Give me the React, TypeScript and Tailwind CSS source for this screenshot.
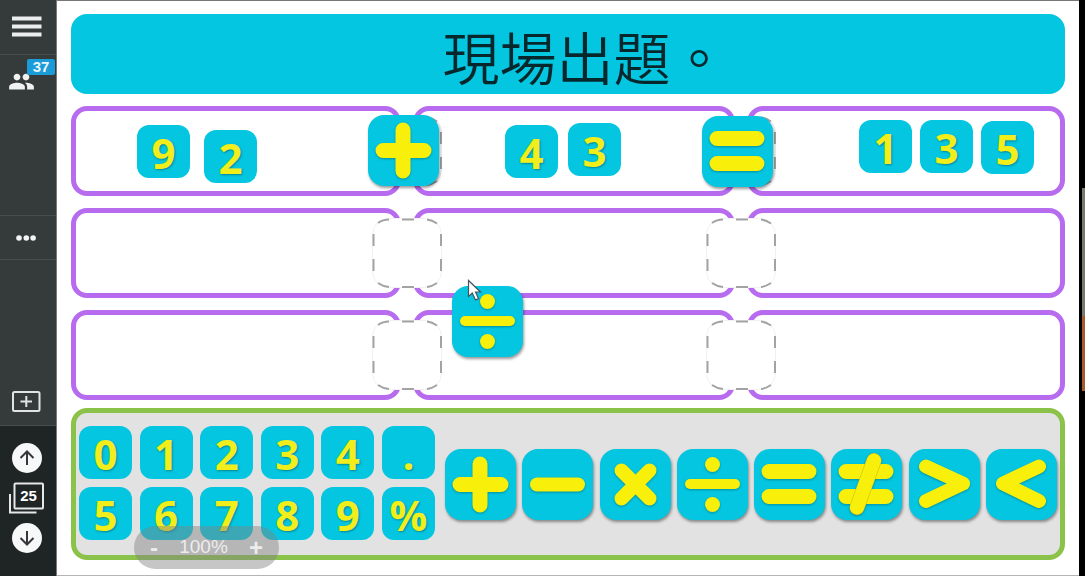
import React from "react";
import { MdPeople } from "react-icons/md";

type OpName = "plus" | "minus" | "times" | "divide" | "equals" | "notEquals" | "greater" | "less";

const digitRows: string[][] = [
  ["0", "1", "2", "3", "4", "."],
  ["5", "6", "7", "8", "9", "%"],
];

const operators: OpName[] = ["plus", "minus", "times", "divide", "equals", "notEquals", "greater", "less"];

const opLabels: Record<OpName, string> = {
  plus: "+",
  minus: "−",
  times: "×",
  divide: "÷",
  equals: "=",
  notEquals: "≠",
  greater: ">",
  less: "<",
};

const placedDigits = [
  { value: "9", place: "left-[80px] top-[124px]" },
  { value: "2", place: "left-[147px] top-[129px]" },
  { value: "4", place: "left-[448px] top-[124px]" },
  { value: "3", place: "left-[511px] top-[122px]" },
  { value: "1", place: "left-[802px] top-[119px]" },
  { value: "3", place: "left-[863px] top-[119px]" },
  { value: "5", place: "left-[924px] top-[120px]" },
];

const placedOps: { op: OpName; place: string }[] = [
  { op: "plus", place: "left-[311px] top-[114px]" },
  { op: "equals", place: "left-[645px] top-[115px]" },
  { op: "divide", place: "left-[395px] top-[285px]" },
];

function OpShape({ op }: { op: OpName }) {
  switch (op) {
    case "plus":
      return <path d="M35 15V56M15 35.5H56" strokeWidth="15" />;
    case "minus":
      return <path d="M15 35.5H56" strokeWidth="14" />;
    case "times":
      return <path d="M21.5 21.5L49.5 49.5M49.5 21.5L21.5 49.5" strokeWidth="14" />;
    case "divide":
      return (
        <>
          <path d="M13 35H58" strokeWidth="10" />
          <circle cx="35.5" cy="15.5" r="7.5" fill="#f8ef0a" stroke="none" />
          <circle cx="35.5" cy="55.5" r="7.5" fill="#f8ef0a" stroke="none" />
        </>
      );
    case "equals":
      return <path d="M15 22.5H55M15 47.5H55" strokeWidth="15" />;
    case "notEquals":
      return (
        <>
          <path d="M15 22.5H55M15 47.5H55" strokeWidth="15" />
          <path d="M43 11.5L26 58.5" stroke="#b9b81c" strokeWidth="15" />
          <path d="M43 11.5L26 58.5" strokeWidth="14" />
        </>
      );
    case "greater":
      return <path d="M17 17.5L54 34.5L17 52" strokeWidth="14" />;
    case "less":
      return <path d="M53 17.5L17 34.5L53 52" strokeWidth="14" />;
  }
}

function OpTile({ op, className = "" }: { op: OpName; className?: string }) {
  return (
    <button
      type="button"
      aria-label={opLabels[op]}
      className={`size-[71px] shrink-0 rounded-2xl bg-[#04c6e0] shadow-[1px_2px_3px_rgba(0,0,0,0.4)] ${className}`}
    >
      <svg
        viewBox="0 0 71 71"
        className="size-full drop-shadow-[0px_1px_1px_rgba(0,60,60,0.4)]"
        fill="none"
        stroke="#f8ef0a"
        strokeLinecap="round"
        strokeLinejoin="round"
      >
        <OpShape op={op} />
      </svg>
    </button>
  );
}

function DigitTile({ value, className = "" }: { value: string; className?: string }) {
  return (
    <button
      type="button"
      className={`size-[53px] shrink-0 rounded-xl bg-[#04c6e0] text-center font-['Open_Sans',sans-serif] text-[42px] leading-[55px] font-bold text-[#f1ee1c] [text-shadow:1px_1px_2px_rgba(0,70,70,0.5)] ${className}`}
    >
      {value}
    </button>
  );
}

function Slot() {
  return (
    <div className="absolute top-[5px] -right-[46px] z-10 size-[70px] rounded-2xl bg-white">
      <svg viewBox="0 0 70 70" className="size-full" fill="none">
        <rect x="0.5" y="0.5" width="69" height="69" rx="16" stroke="#f1f1f1" />
        <path
          d="M6 5Q11 1.500 17 1.500M30 1.500H42M55 1.500Q60 2 65 5.500M69 16V28M69 41V53M65 65Q60 68.500 55 69M42 69H30M17 69Q11 68.500 6 65M1.500 53V41M1.500 28V16"
          stroke="#a3a3a3"
          strokeWidth="2"
        />
      </svg>
    </div>
  );
}

function EquationRow() {
  const cell = "relative h-[90px] rounded-2xl border-5 border-[#b76cf0]";
  return (
    <div className="grid grid-cols-[330fr_322fr_318fr] gap-3">
      <div className={cell}>
        <Slot />
      </div>
      <div className={cell}>
        <Slot />
      </div>
      <div className={cell} />
    </div>
  );
}

function ArrowCircle({ down = false }: { down?: boolean }) {
  return (
    <button type="button" aria-label={down ? "下一頁" : "上一頁"} className="size-[30px] rounded-full bg-[#f7f8f8]">
      <svg viewBox="0 0 30 30" className="size-full" fill="none" stroke="#33393a" strokeWidth="2">
        {down ? <path d="M15 8V21.500M8.500 15L15 21.500L21.500 15" /> : <path d="M15 22V8.500M8.500 15L15 8.500L21.500 15" />}
      </svg>
    </button>
  );
}

function Sidebar() {
  return (
    <nav className="flex w-[57px] shrink-0 flex-col border-r border-[#777b7b] bg-[#353a3b]">
      <button type="button" aria-label="選單" className="flex h-[55px] items-center border-b border-[#484e4e] pl-3">
        <svg viewBox="0 0 30 22" className="h-[22px] w-[30px]" stroke="#eceeee" strokeWidth="4">
          <path d="M0 2.500H29.500M0 10.500H29.500M0 18.500H29.500" />
        </svg>
      </button>
      <div className="h-[161px] border-b border-[#484e4e] pt-1">
        <button type="button" aria-label="參與者" className="relative block h-10 w-[55px]">
          <MdPeople className="absolute top-[9px] left-2 size-[27px] text-[#f0f2f2]" />
          <span className="absolute top-0 right-0 w-7 rounded-xs bg-[#1b9bd8] text-center font-['Liberation_Sans',sans-serif] text-[15px] leading-4 font-bold text-[#e9f6fc]">
            37
          </span>
        </button>
      </div>
      <button type="button" aria-label="更多" className="flex h-11 items-center border-b border-[#484e4e] pl-4">
        <svg viewBox="0 0 20 6" className="h-[6px] w-5" fill="#f3f5f5">
          <circle cx="3" cy="3" r="2.800" />
          <circle cx="10.300" cy="3" r="2.800" />
          <circle cx="17.100" cy="3" r="2.800" />
        </svg>
      </button>
      <div className="flex grow items-end border-b border-[#484e4e] pb-[13px] pl-3">
        <button type="button" aria-label="新增頁面">
          <svg viewBox="0 0 29 21" className="block h-[21px] w-[29px]" fill="none" stroke="#e2e4e4" strokeWidth="2">
            <rect x="1" y="1" width="26.500" height="19" rx="1.500" />
            <path d="M14.300 5V16M8.500 10.500H20" />
          </svg>
        </button>
      </div>
      <div className="flex h-[150px] flex-col items-center gap-[9px] bg-[#1f2425] pt-[17px] pr-[3px]">
        <ArrowCircle />
        <button type="button" className="relative h-8 w-9" aria-label="頁 25">
          <svg viewBox="0 0 36 32" className="absolute inset-0 size-full" fill="none" stroke="#e6e8e8" strokeWidth="2">
            <rect x="5.500" y="1.500" width="28.500" height="25" rx="1" />
            <path d="M1 12V30.500H27.500" />
          </svg>
          <span className="absolute top-[5px] left-[6px] w-7 text-center font-['Liberation_Sans',sans-serif] text-[15px] leading-[18px] font-bold text-white">
            25
          </span>
        </button>
        <ArrowCircle down />
      </div>
    </nav>
  );
}

export default function App() {
  return (
    <div className="flex min-h-screen bg-black">
      <Sidebar />
      <main className="relative min-w-0 grow border-t border-b border-t-[#777] border-b-[#b5b5b5] bg-white px-[14px] pt-[13px]">
        <h1 className="h-20 rounded-2xl bg-[#04c6e0] pl-[34px] text-center font-['Noto_Sans_CJK_TC',sans-serif] text-[57px] leading-[82px] font-[350] text-[#06272c]">
          現場出題。
        </h1>
        <div className="mt-3 flex flex-col gap-3">
          <EquationRow />
          <EquationRow />
          <EquationRow />
        </div>

        <section className="mt-2 flex h-[152px] items-start gap-[10px] rounded-2xl border-5 border-[#8bc34a] bg-[#e2e2e2] pr-[3px] pl-[3px]">
          <div className="flex w-[356px] shrink-0 flex-col gap-2 pt-[13px]">
            {digitRows.map((row) => (
              <div key={row[0]} className="flex justify-between">
                {row.map((value) => (
                  <DigitTile key={value} value={value} />
                ))}
              </div>
            ))}
          </div>
          <div className="flex grow justify-between pt-9">
            {operators.map((op) => (
              <OpTile key={op} op={op} />
            ))}
          </div>
        </section>

        {placedDigits.map((tile) => (
          <DigitTile key={tile.place} value={tile.value} className={`absolute z-20 ${tile.place}`} />
        ))}
        {placedOps.map((tile) => (
          <OpTile key={tile.place} op={tile.op} className={`absolute z-20 ${tile.place}`} />
        ))}

        <svg viewBox="0 0 16 24" className="absolute top-[278px] left-[410px] z-30 h-6 w-4">
          <path
            d="M1.500 1.500V17.500L5.300 14L8.500 21L11.500 19.600L8.500 13H13.500Z"
            fill="#fff"
            stroke="#44535c"
            strokeWidth="1.200"
          />
        </svg>

        <div className="absolute bottom-[6px] left-[77px] z-30 flex h-[43px] w-[145px] items-center justify-between rounded-full bg-[#808080]/45 px-4 font-['Liberation_Sans',sans-serif] text-[19px] text-[#ececec]">
          <button type="button" aria-label="縮小" className="text-2xl font-bold">
            -
          </button>
          <span>100%</span>
          <button type="button" aria-label="放大" className="text-2xl font-bold">
            +
          </button>
        </div>
      </main>
      <aside className="w-[6px] shrink-0 pt-[188px] pl-[3px]">
        <div className="h-32 bg-[#777a6c]" />
        <div className="h-[75px] bg-[#a85a2c]" />
      </aside>
    </div>
  );
}
